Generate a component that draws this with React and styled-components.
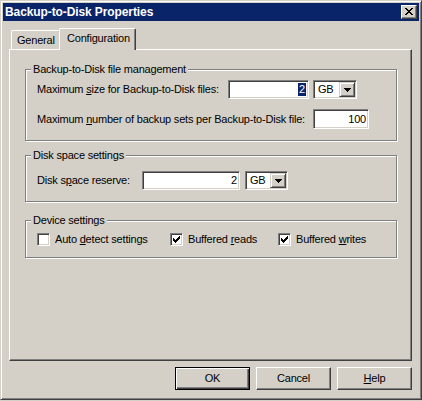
import React from 'react';
import styled, { createGlobalStyle } from 'styled-components';

const FACE = '#d4d0c8';
const SHADOW = '#808080';
const DARK = '#404040';
const NAVY = '#0a246a';

const Global = createGlobalStyle`
  html, body { margin: 0; padding: 0; background: ${FACE}; }
  body {
    font-family: "Liberation Sans", Arial, sans-serif;
    font-size: 11px;
    letter-spacing: -0.2px;
    color: #000;
  }
  * { box-sizing: border-box; }
`;

const Window = styled.div`
  width: 422px;
  height: 400px;
  border: 1px solid;
  border-color: ${FACE} ${DARK} ${DARK} ${FACE};
  box-shadow: inset 1px 1px #fff, inset -1px -1px ${SHADOW};
  padding: 2px;
  background: ${FACE};
  display: flex;
  flex-direction: column;
`;

const TitleBar = styled.div`
  height: 18px;
  flex: none;
  background: ${NAVY};
  display: flex;
  align-items: center;
  justify-content: space-between;
  padding: 0 2px 0 2px;
`;

const Title = styled.span`
  color: #fff;
  font-weight: bold;
  font-size: 12px;
  letter-spacing: -0.1px;
  line-height: 14px;
`;

const CloseButton = styled.div`
  width: 16px;
  height: 14px;
  background: ${FACE};
  border: 1px solid;
  border-color: #fff ${DARK} ${DARK} #fff;
  box-shadow: inset -1px -1px ${SHADOW};
  display: flex;
  align-items: flex-start;
  justify-content: flex-start;
  padding: 2px 0 0 3px;
`;

const Client = styled.div`
  display: flex;
  flex-direction: column;
  padding: 7px 0 0 6px;
`;

const TabStrip = styled.div`
  display: flex;
  align-items: flex-end;
  height: 21px;
  padding-left: 2px;
  z-index: 1;
`;

const Tab = styled.div`
  flex: none;
  width: ${p => p.$w}px;
  height: ${p => (p.$active ? 22 : 19)}px;
  margin-bottom: ${p => (p.$active ? -1 : 0)}px;
  margin-left: ${p => (p.$active ? -2 : 0)}px;
  z-index: ${p => (p.$active ? 1 : 0)};
  background: ${FACE};
  border-top: 1px solid #fff;
  border-left: 1px solid #fff;
  border-right: 1px solid ${DARK};
  box-shadow: inset -1px 0 ${SHADOW};
  border-radius: 2px 2px 0 0;
  padding: 3px 0 0 ${p => p.$pl}px;
  line-height: 13px;
  white-space: nowrap;
`;

const Panel = styled.div`
  width: 403px;
  height: 312px;
  border: 1px solid;
  border-color: #fff ${DARK} ${DARK} #fff;
  box-shadow: inset -1px -1px ${SHADOW};
  padding-left: 15px;
  display: flex;
  flex-direction: column;
`;

const Group = styled.div`
  position: relative;
  flex: none;
  width: 372px;
  height: ${p => p.$h}px;
  margin-top: ${p => p.$mt}px;
  border: 1px solid ${SHADOW};
  box-shadow: inset 1px 1px #fff, 1px 1px #fff;
  padding: ${p => p.$pt}px 0 0 11px;
`;

const Legend = styled.span`
  position: absolute;
  top: -7px;
  left: 5px;
  padding: 0 2px;
  background: ${FACE};
  line-height: 13px;
  white-space: nowrap;
`;

const Row = styled.div`
  display: flex;
  align-items: center;
  margin-top: ${p => p.$mt || 0}px;
`;

const Label = styled.span`
  flex: none;
  width: ${p => p.$w}px;
  line-height: 13px;
  white-space: nowrap;
`;

const Sunken = styled.div`
  flex: none;
  width: ${p => p.$w}px;
  height: ${p => p.$h || 19}px;
  background: #fff;
  border: 1px solid;
  border-color: ${SHADOW} #fff #fff ${SHADOW};
  box-shadow: inset 1px 1px ${DARK}, inset -1px -1px ${FACE};
`;

const Field = styled(Sunken)`
  display: flex;
  align-items: center;
  justify-content: flex-end;
  padding-right: 2px;
  line-height: 13px;
`;

const Selected = styled.span`
  background: ${NAVY};
  color: #fff;
  padding: 0 1px;
`;

const Combo = styled(Sunken)`
  margin-left: ${p => p.$ml}px;
  display: flex;
  align-items: stretch;
  padding: 1px;
`;

const ComboText = styled.span`
  flex: 1;
  padding-left: 3px;
  display: flex;
  align-items: center;
  line-height: 13px;
`;

const DropButton = styled.div`
  width: 16px;
  flex: none;
  background: ${FACE};
  border: 1px solid;
  border-color: ${FACE} ${DARK} ${DARK} ${FACE};
  box-shadow: inset 1px 1px #fff, inset -1px -1px ${SHADOW};
  display: flex;
  align-items: center;
  justify-content: center;
`;

const CheckItem = styled.label`
  display: flex;
  align-items: center;
  flex: none;
  width: ${p => (p.$w ? `${p.$w}px` : 'auto')};
  line-height: 13px;
  white-space: nowrap;
`;

const CheckBox = styled(Sunken)`
  width: 13px;
  height: 13px;
  margin-right: 5px;
  padding: 2px 0 0 2px;
  display: flex;
  align-items: flex-start;
`;

const ButtonRow = styled.div`
  display: flex;
  justify-content: flex-end;
  gap: 6px;
  width: 403px;
  margin-top: 6px;
`;

const Button = styled.div`
  width: 75px;
  height: 23px;
  background: ${FACE};
  border: 1px solid;
  border-color: ${p => (p.$default ? '#000' : `#fff ${DARK} ${DARK} #fff`)};
  box-shadow: ${p =>
    p.$default
      ? `inset 1px 1px #fff, inset -1px -1px ${DARK}, inset -2px -2px ${SHADOW}`
      : `inset -1px -1px ${SHADOW}`};
  display: flex;
  align-items: center;
  justify-content: center;
  line-height: 13px;
`;

const U = styled.u`
  text-decoration: underline;
  text-underline-offset: 1px;
`;

const Pixels = ({ rows, color = '#000' }) => {
  const w = rows[0].length;
  const h = rows.length;
  const rects = [];
  rows.forEach((r, y) => {
    for (let x = 0; x < r.length; x++) {
      if (r[x] === '#') rects.push(<rect key={`${x}-${y}`} x={x} y={y} width="1" height="1" fill={color} />);
    }
  });
  return (
    <svg width={w} height={h} viewBox={`0 0 ${w} ${h}`} shapeRendering="crispEdges" style={{ display: 'block' }}>
      {rects}
    </svg>
  );
};

const CLOSE_X = [
  '##....##',
  '.##..##.',
  '..####..',
  '...##...',
  '..####..',
  '.##..##.',
  '##....##',
];

const CHECK = [
  '......#',
  '.....##',
  '#...###',
  '##.###.',
  '#####..',
  '.###...',
  '..#....',
];

const ARROW = ['#######', '.#####.', '..###..', '...#...'];

const Check = ({ checked }) => (
  <CheckBox>{checked && <Pixels rows={CHECK} />}</CheckBox>
);

const GbCombo = ({ w, ml }) => (
  <Combo $w={w} $ml={ml}>
    <ComboText>GB</ComboText>
    <DropButton>
      <Pixels rows={ARROW} />
    </DropButton>
  </Combo>
);

export default function App() {
  return (
    <>
      <Global />
      <Window>
        <TitleBar>
          <Title>Backup-to-Disk Properties</Title>
          <CloseButton>
            <Pixels rows={CLOSE_X} />
          </CloseButton>
        </TitleBar>
        <Client>
          <TabStrip>
            <Tab $w={50} $pl={5}>General</Tab>
            <Tab $w={77} $pl={7} $active>Configuration</Tab>
          </TabStrip>
          <Panel>
            <Group $mt={19} $h={72} $pt={10}>
              <Legend>Backup-to-Disk file management</Legend>
              <Row>
                <Label $w={191}>Maximum <U>s</U>ize for Backup-to-Disk files:</Label>
                <Field $w={81}><Selected>2</Selected></Field>
                <GbCombo w={44} ml={4} />
              </Row>
              <Row $mt={10}>
                <Label $w={276}>Maximum <U>n</U>umber of backup sets per Backup-to-Disk file:</Label>
                <Field $w={56} $h={20}>100</Field>
              </Row>
            </Group>
            <Group $mt={14} $h={47} $pt={15}>
              <Legend>Disk space settings</Legend>
              <Row>
                <Label $w={105}>Disk s<U>p</U>ace reserve:</Label>
                <Field $w={98}>2</Field>
                <GbCombo w={43} ml={5} />
              </Row>
            </Group>
            <Group $mt={18} $h={38} $pt={12}>
              <Legend>Device settings</Legend>
              <Row>
                <CheckItem $w={133}>
                  <Check />
                  <span>Auto <U>d</U>etect settings</span>
                </CheckItem>
                <CheckItem $w={108}>
                  <Check checked />
                  <span>Buffered <U>r</U>eads</span>
                </CheckItem>
                <CheckItem>
                  <Check checked />
                  <span>Buffered <U>w</U>rites</span>
                </CheckItem>
              </Row>
            </Group>
          </Panel>
          <ButtonRow>
            <Button $default>OK</Button>
            <Button>Cancel</Button>
            <Button><span><U>H</U>elp</span></Button>
          </ButtonRow>
        </Client>
      </Window>
    </>
  );
}
